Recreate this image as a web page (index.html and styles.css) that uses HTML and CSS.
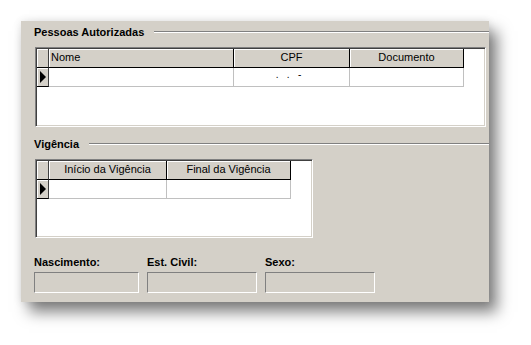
FILE: index.html
```html
<!DOCTYPE html>
<html lang="pt">

<head>
    <meta charset="UTF-8">
    <title>Pessoas Autorizadas</title>
    <link rel="stylesheet" href="styles.css">
</head>

<body>
    <div class="window">
        <!-- Pessoas Autorizadas -->
        <div class="group-title">
            <span>Pessoas Autorizadas</span>
            <div class="etched"></div>
        </div>
        <div class="grid grid-pessoas">
            <div class="hcell ind"></div>
            <div class="hcell left">Nome</div>
            <div class="hcell">CPF</div>
            <div class="hcell">Documento</div>
            <div class="hcell ind"><span class="arrow"></span></div>
            <div class="dcell"></div>
            <div class="dcell mask">.&nbsp;&nbsp;&nbsp;.&nbsp;&nbsp;&nbsp;-</div>
            <div class="dcell"></div>
        </div>

        <!-- Vigência -->
        <div class="group-title second">
            <span>Vigência</span>
            <div class="etched"></div>
        </div>
        <div class="grid grid-vigencia">
            <div class="hcell ind"></div>
            <div class="hcell">Início da Vigência</div>
            <div class="hcell">Final da Vigência</div>
            <div class="hcell ind"><span class="arrow"></span></div>
            <div class="dcell"></div>
            <div class="dcell"></div>
        </div>

        <!-- Campos -->
        <div class="fields">
            <div class="field f-nasc">
                <label>Nascimento:</label>
                <div class="box"></div>
            </div>
            <div class="field f-civil">
                <label>Est. Civil:</label>
                <div class="box"></div>
            </div>
            <div class="field f-sexo">
                <label>Sexo:</label>
                <div class="box"></div>
            </div>
        </div>
    </div>
</body>

</html>
```

FILE: styles.css
```css
body {
    margin: 0;
    padding: 21px 0 0 21px;
    min-height: 345px;
    box-sizing: border-box;
    background: #fff;
    font-family: 'Liberation Sans', Arial, sans-serif;
    font-size: 11px;
    color: #000;
}

.window {
    width: 468px;
    height: 277px;
    padding-top: 4px;
    background: #d4d0c8;
    box-shadow: 8px 10px 14px rgba(0, 0, 0, 0.5), 0 0 8px rgba(0, 0, 0, 0.1);
}

.group-title {
    display: flex;
    align-items: center;
    height: 14px;
    padding-left: 13px;
    font-weight: bold;
    line-height: 14px;
}

.group-title.second {
    margin-top: 10px;
}

.etched {
    flex: 1;
    margin-left: 10px;
    border-top: 1px solid #808080;
    border-bottom: 1px solid #fff;
}

.grid {
    display: grid;
    grid-template-rows: 19px 19px;
    align-content: start;
    margin: 8px 0 0 14px;
    background: #fff;
    border-top: 1px solid #808080;
    border-left: 1px solid #808080;
    border-right: 1px solid #fff;
    border-bottom: 1px solid #fff;
    box-shadow: inset 1px 1px 0 #404040, inset -1px -1px 0 #d4d0c8;
    padding: 1px 0 0 1px;
}

.grid-pessoas {
    width: 448px;
    height: 77px;
    grid-template-columns: 12px 185px 116px 114px;
}

.grid-vigencia {
    width: 275px;
    height: 76px;
    grid-template-columns: 12px 118px 124px;
}

.hcell {
    background: #d4d0c8;
    border-right: 1px solid #000;
    border-bottom: 1px solid #000;
    box-shadow: inset 1px 1px 0 #fff;
    text-align: center;
    line-height: 17px;
    white-space: nowrap;
    overflow: hidden;
}

.hcell.left {
    text-align: left;
    padding-left: 2px;
}

.hcell.ind {
    border-right-color: #404040;
    position: relative;
}

.arrow {
    position: absolute;
    left: 3px;
    top: 3px;
    border-left: 6px solid #000;
    border-top: 6px solid transparent;
    border-bottom: 6px solid transparent;
}

.dcell {
    border-right: 1px solid #c0c0c0;
    border-bottom: 1px solid #c0c0c0;
}

.mask {
    text-align: center;
    line-height: 14px;
    font-size: 10px;
    padding-right: 6px;
}

.fields {
    display: flex;
    gap: 8px;
    margin: 17px 0 0 13px;
}

.field label {
    display: block;
    font-weight: bold;
    line-height: 14px;
    margin-bottom: 3px;
}

.box {
    height: 19px;
    border-top: 1px solid #808080;
    border-left: 1px solid #808080;
    border-right: 1px solid #fff;
    border-bottom: 1px solid #fff;
}

.f-nasc .box {
    width: 103px;
}

.f-civil .box {
    width: 108px;
}

.f-sexo .box {
    width: 108px;
}
```
